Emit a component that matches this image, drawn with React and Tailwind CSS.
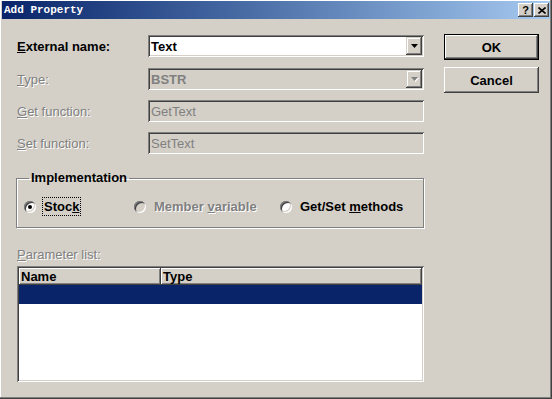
import React from 'react';

const sunken =
  'shadow-[inset_1px_1px_0_#808080,inset_-1px_-1px_0_#fff,inset_2px_2px_0_#404040,inset_-2px_-2px_0_#d4d0c8]';
const raised =
  'shadow-[inset_-1px_-1px_0_#404040,inset_1px_1px_0_#fff,inset_-2px_-2px_0_#808080,inset_2px_2px_0_#d4d0c8]';
const comboBtn =
  'shadow-[inset_-1px_-1px_0_#404040,inset_1px_1px_0_#d4d0c8,inset_-2px_-2px_0_#808080,inset_2px_2px_0_#fff]';
const disabledText = 'text-[#808080] [text-shadow:1px_1px_0_#fff]';

function Arrow({ disabled }) {
  return (
    <svg width="7" height="4" viewBox="0 0 7 4" className={disabled ? '[filter:drop-shadow(1px_1px_0_#fff)]' : ''}>
      <polygon points="0,0 7,0 3.5,4" fill={disabled ? '#808080' : '#000'} />
    </svg>
  );
}

function Combo({ value, disabled }) {
  return (
    <div className={`relative h-[22px] flex items-center ${disabled ? 'bg-[#d4d0c8]' : 'bg-white'} ${sunken}`}>
      <span className={`pl-[3px] font-bold ${disabled ? 'text-[#808080]' : 'text-black'}`}>{value}</span>
      <div className={`absolute right-[2px] top-[2px] w-[16px] h-[18px] bg-[#d4d0c8] flex items-center justify-center ${comboBtn}`}>
        <Arrow disabled={disabled} />
      </div>
    </div>
  );
}

function Edit({ value }) {
  return (
    <div className={`h-[22px] flex items-center bg-[#d4d0c8] ${sunken}`}>
      <span className="pl-[3px] text-[#808080]">{value}</span>
    </div>
  );
}

function Row({ label, children, disabled, className = '' }) {
  return (
    <div className={`flex items-center ${className}`}>
      <div className={`w-[131px] ${disabled ? disabledText : 'font-bold text-black'}`}>{label}</div>
      <div className="flex-1">{children}</div>
    </div>
  );
}

function Radio({ checked, disabled, label, focused, width }) {
  return (
    <div className={`flex items-center gap-[6px] ${width}`}>
      <div
        className={`w-[12px] h-[12px] rounded-full flex items-center justify-center ${disabled ? 'bg-[#d4d0c8]' : 'bg-white'} ${sunken}`}
      >
        {checked && <div className="w-[4px] h-[4px] rounded-full bg-black" />}
      </div>
      <span
        className={`px-[1px] leading-[17px] font-bold border ${focused ? 'border-dotted border-black' : 'border-transparent'} ${
          disabled ? disabledText : 'text-black'
        }`}
      >
        {label}
      </span>
    </div>
  );
}

export default function App() {
  return (
    <div
      className="w-[552px] h-[399px] bg-[#d4d0c8] flex flex-col px-[2px] pt-[1px] pb-[3px] text-[13px] leading-[15px] font-['Liberation_Sans',Arial,sans-serif] shadow-[inset_-1px_-1px_0_#404040,inset_-2px_-2px_0_#808080,inset_1px_1px_0_#fff]"
    >
      <div className="h-[18px] flex items-center justify-between pl-[2px] pr-[1px] bg-linear-to-r from-[#0a246a] to-[#a6caf0]">
        <span className="text-white font-bold text-[11px] font-['Liberation_Mono',monospace]">Add Property</span>
        <div className="flex gap-[1px]">
          <div className={`w-[15px] h-[14px] bg-[#d4d0c8] flex items-center justify-center ${raised}`}>
            <span className="text-[11px] leading-[11px] font-bold text-black">?</span>
          </div>
          <div className={`w-[15px] h-[14px] bg-[#d4d0c8] flex items-center justify-center ${raised}`}>
            <svg width="8" height="7" viewBox="0 0 8 7">
              <path d="M0.5 0.5 L7.5 6.5 M7.5 0.5 L0.5 6.5" stroke="#000" strokeWidth="1.6" />
            </svg>
          </div>
        </div>
      </div>

      <div className="flex flex-1 pl-[15px] pt-[15px]">
        <div className="w-[407px] flex flex-col pt-[1px]">
          <Row label={<><u>E</u>xternal name:</>}>
            <Combo value="Text" />
          </Row>
          <Row label={<><u>T</u>ype:</>} disabled className="mt-[11px]">
            <Combo value="BSTR" disabled />
          </Row>
          <Row label={<><u>G</u>et function:</>} disabled className="mt-[10px]">
            <Edit value="GetText" />
          </Row>
          <Row label={<><u>S</u>et function:</>} disabled className="mt-[10px]">
            <Edit value="SetText" />
          </Row>

          <fieldset className="-ml-[1px] w-[408px] mt-[17px] border border-[#808080] shadow-[inset_1px_1px_0_#fff,1px_1px_0_#fff] pl-[7px] pt-[12px] pb-[11px]">
            <legend className="ml-[5px] px-[2px] font-bold text-black leading-[14px]">Implementation</legend>
            <div className="flex items-center">
              <Radio checked focused width="w-[110px]" label={<>Stoc<u>k</u></>} />
              <Radio disabled width="w-[146px]" label={<>Member <u>v</u>ariable</>} />
              <Radio label={<>Get/Set <u>m</u>ethods</>} />
            </div>
          </fieldset>

          <div className={`mt-[19px] ${disabledText}`}>
            <u>P</u>arameter list:
          </div>
          <div className={`mt-[4px] w-[407px] h-[116px] bg-white p-[2px] ${sunken}`}>
            <div className="flex h-[17px]">
              <div className={`w-[142px] bg-[#d4d0c8] pl-[2px] font-bold text-black leading-[17px] ${raised}`}>Name</div>
              <div className={`flex-1 bg-[#d4d0c8] pl-[2px] font-bold text-black leading-[17px] ${raised}`}>Type</div>
            </div>
            <div className="h-[19px] bg-[#0a246a]" />
          </div>
        </div>

        <div className="ml-[20px] flex flex-col gap-[7px]">
          <div className="w-[95px] h-[26px] border border-black">
            <div className={`w-full h-full bg-[#d4d0c8] flex items-center justify-center font-bold text-black ${raised}`}>
              OK
            </div>
          </div>
          <div className={`w-[95px] h-[26px] bg-[#d4d0c8] flex items-center justify-center font-bold text-black ${raised}`}>
            Cancel
          </div>
        </div>
      </div>
    </div>
  );
}
